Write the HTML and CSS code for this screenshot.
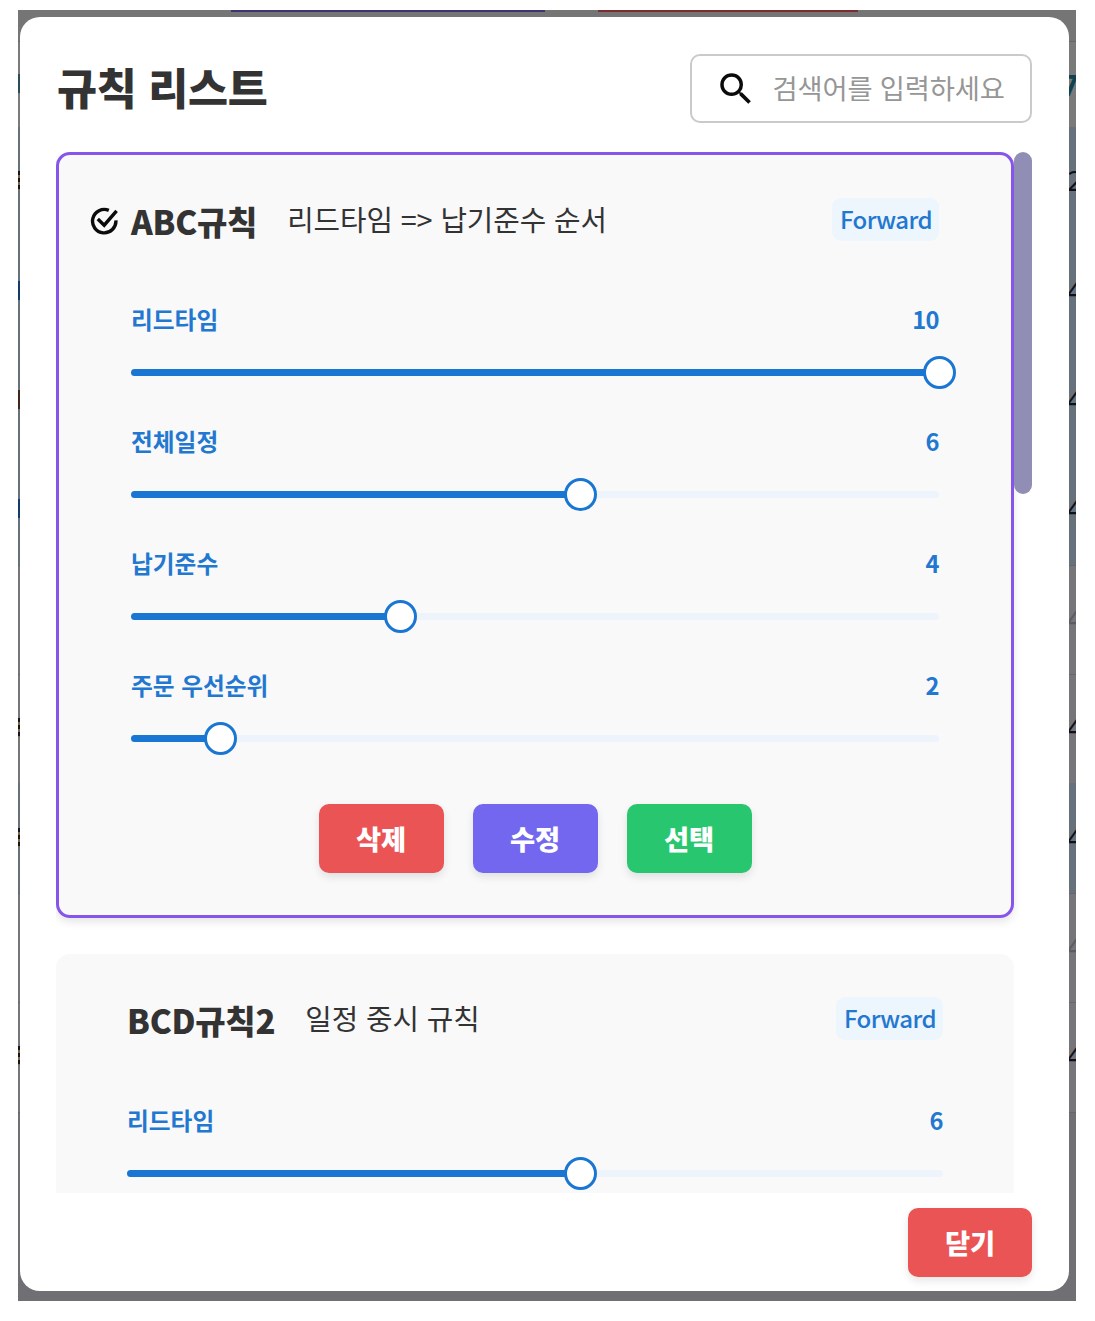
FILE: index.html
```html
<!DOCTYPE html>
<html lang="ko">
<head>
<meta charset="utf-8">
<title>규칙 리스트</title>
<link rel="stylesheet" href="styles.css">
</head>
<body>
<div class="stage">
  <div class="toolbar"><span class="tab tab-indigo"></span><span class="tab tab-red"></span></div>
  <div class="table">
    <div class="row row-head"><i class="mark teal"></i><span class="num">7</span></div>
    <div class="row sel"><i class="mark dark"></i><span class="num">2</span></div>
    <div class="row sel"><i class="mark blue"></i><span class="num">4</span></div>
    <div class="row sel"><i class="mark red"></i><span class="num">4</span></div>
    <div class="row sel"><i class="mark blue"></i><span class="num">4</span></div>
    <div class="row muted"><i class="mark"></i><span class="num">4</span></div>
    <div class="row"><i class="mark dark"></i><span class="num">4</span></div>
    <div class="row sel"><i class="mark dark"></i><span class="num">4</span></div>
    <div class="row muted"><i class="mark"></i><span class="num">4</span></div>
    <div class="row"><i class="mark dark"></i><span class="num">4</span></div>
    <div class="row row-foot"></div>
  </div>

  <main class="modal">
    <header class="modal-head">
      <h1>규칙 리스트</h1>
      <label class="search">
        <svg width="42" height="42" viewBox="0 0 24 24"><path d="M15.5 14h-.79l-.28-.27A6.47 6.47 0 0 0 16 9.5 6.5 6.5 0 1 0 9.5 16c1.61 0 3.09-.59 4.23-1.57l.27.28v.79l5 4.99L20.49 19l-4.99-5zm-6 0C7.01 14 5 11.99 5 9.5S7.01 5 9.5 5 14 7.01 14 9.5 11.99 14 9.5 14z"/></svg>
        <span>검색어를 입력하세요</span>
      </label>
    </header>

    <div class="list">
      <div class="cards">
        <section class="card active">
          <div class="card-head">
            <svg class="check" width="29" height="29" viewBox="0 0 29 29" fill="none" stroke="#0b0b0b" stroke-width="3.4"><path d="M18.8 3.4A11.7 11.7 0 1 0 25.9 13.4"/><path d="M7.8 12l6.4 6.2L26.6 3.8"/></svg>
            <h2>ABC규칙</h2>
            <p>리드타임 =&gt; 납기준수 순서</p>
            <span class="badge">Forward</span>
          </div>
          <div class="field"><div class="field-top"><span>리드타임</span><b>10</b></div><div class="track"><div class="fill" style="width:100%"></div><i class="thumb"></i></div></div>
          <div class="field"><div class="field-top"><span>전체일정</span><b>6</b></div><div class="track"><div class="fill" style="width:55.6%"></div><i class="thumb"></i></div></div>
          <div class="field"><div class="field-top"><span>납기준수</span><b>4</b></div><div class="track"><div class="fill" style="width:33.33%"></div><i class="thumb"></i></div></div>
          <div class="field"><div class="field-top"><span>주문 우선순위</span><b>2</b></div><div class="track"><div class="fill" style="width:11.11%"></div><i class="thumb"></i></div></div>
          <div class="actions">
            <button class="btn danger">삭제</button>
            <button class="btn primary">수정</button>
            <button class="btn success">선택</button>
          </div>
        </section>
        <section class="card">
          <div class="card-head">
            <h2>BCD규칙2</h2>
            <p>일정 중시 규칙</p>
            <span class="badge">Forward</span>
          </div>
          <div class="field"><div class="field-top"><span>리드타임</span><b>6</b></div><div class="track"><div class="fill" style="width:55.56%"></div><i class="thumb"></i></div></div>
        </section>
      </div>
      <div class="scrollbar"></div>
    </div>

    <footer class="modal-foot"><button class="btn danger">닫기</button></footer>
  </main>
</div>
</body>
</html>
```
FILE: styles.css
```css
* { box-sizing: border-box; }
body {
  margin: 0;
  padding: 10px 19px 20px 18px;
  background: #fff;
  color: #333;
  font-family: "Noto Sans CJK KR", sans-serif;
}
h1, h2, p { margin: 0; }

/* dimmed page behind the dialog */
.stage {
  position: relative;
  width: 1058px;
  height: 1291px;
  padding: 7px 7px 10px 2px;
  background: #757575;
  overflow: hidden;
}
.toolbar {
  position: absolute;
  inset: 0 0 auto 0;
  height: 2px;
  display: flex;
  gap: 53px;
  padding-left: 213px;
}
.tab { height: 2px; }
.tab-indigo { width: 314px; background: #3b3672; }
.tab-red { width: 260px; background: #7b2d2f; }
.table {
  position: absolute;
  inset: 31px 0 0 0;
  display: flex;
  flex-direction: column;
  background: #707074;
}
.row {
  height: 109.4px;
  flex: none;
  display: flex;
  align-items: center;
  justify-content: space-between;
  border-top: 1px solid #67676b;
  background: #75757a;
  color: #101018;
}
.row-head { height: 86px; background: #7b7a7a; color: #12414f; font-weight: 700; }
.row.sel { background: #66717b; border-top-color: #66717b; }
.row.muted { color: #5c5c62; }
.row-foot { height: 103px; background: #707074; }
.mark { width: 2px; height: 19px; margin-top: -3px; }
.teal { background: #2a4d58; }
.blue { background: #153b6b; }
.red { background: #44261f; }
.dark { background: repeating-linear-gradient(#15151a 0 4px, #80633c 4px 7px); }
.num {
  width: 9px;
  margin-top: -4px;
  font: 28px/30px "Noto Sans", sans-serif;
}
.row-head .num { width: 14px; font-weight: 700; margin-top: 0; }

.modal {
  position: relative;
  height: 1274px;
  padding: 37px 37px 14px;
  border-radius: 20px;
  background: #fff;
  display: flex;
  flex-direction: column;
}
.modal-head {
  display: flex;
  justify-content: space-between;
  align-items: center;
  height: 69px;
  margin-bottom: 29px;
}
h1 { font-size: 43.5px; font-weight: 900; line-height: 66px; letter-spacing: -.3px; padding-bottom: 3px; }
.search {
  display: flex;
  align-items: center;
  width: 342px;
  height: 69px;
  padding-left: 23px;
  gap: 15.5px;
  border: 2px solid #cacaca;
  border-radius: 10px;
  color: #969696;
  font-size: 27.3px;
  letter-spacing: -.15px;
  line-height: 40px;
  white-space: nowrap;
}
.search svg { flex: none; fill: #0b0b0b; }
.search span { padding-bottom: 3px; }

.list { display: flex; height: 1041px; margin-left: -1px; overflow: hidden; }
.cards { width: 958px; flex: none; }
.card {
  height: 766px;
  margin-bottom: 36px;
  padding: 35px 71px 0;
  border-radius: 14px;
  background: #f9f9f9;
}
.card.active {
  padding: 31px 72px 0;
  border: 3px solid #8655eb;
  box-shadow: 0 4px 8px rgba(0, 0, 0, .1);
}
.card-head {
  position: relative;
  display: flex;
  align-items: center;
  height: 68px;
  margin-bottom: 42px;
  white-space: nowrap;
}
.card:not(.active) .card-head { margin-top: -4px; margin-bottom: 44px; }
.check { position: absolute; left: -41px; top: 21px; }
h2 { font-size: 33px; font-weight: 900; line-height: 48px; padding-top: 2px; margin-right: 30px; letter-spacing: -.25px; }
.card-head p { font-size: 28.8px; line-height: 44px; padding-bottom: 2px; letter-spacing: -.1px; }
.badge {
  margin-left: auto;
  margin-bottom: 2px;
  height: 43px;
  padding: 0 7px 0 8px;
  border-radius: 9px;
  background: #edf5fd;
  color: #2278d0;
  font-size: 24px;
  letter-spacing: -.6px;
  font-weight: 500;
  line-height: 42px;
}
.field { height: 122px; color: #2278d0; }
.field-top {
  display: flex;
  justify-content: space-between;
  height: 47px;
  font-size: 23.7px;
  line-height: 46px;
  font-weight: 700;
}
.field-top b { font-weight: 700; letter-spacing: -.6px; }
.track {
  display: flex;
  align-items: center;
  height: 7px;
  margin-top: 26px;
  border-radius: 4px;
  background: #edf4fc;
}
.fill { flex: none; height: 7px; border-radius: 4px; background: #1976d2; }
.thumb {
  flex: none;
  width: 33px;
  height: 33px;
  margin-left: -16.5px;
  border: 3px solid #1976d2;
  border-radius: 50%;
  background: #fff;
}
.actions { display: flex; justify-content: center; gap: 29px; margin-top: 20px; }
.btn {
  width: 125px;
  height: 69px;
  padding: 0;
  border: 0;
  border-radius: 10px;
  color: #fff;
  font: 900 27.3px/69px "Noto Sans CJK KR", sans-serif;
  box-shadow: 0 4px 8px rgba(0, 0, 0, .1);
}
.danger { background: #ea5455; }
.primary { background: #7367f0; }
.success { background: #28c76f; }
.scrollbar { width: 18px; height: 342px; border-radius: 9px; background: #918eb5; }
.modal-foot { display: flex; justify-content: flex-end; margin-top: 15px; }
.modal-foot .btn { width: 124px; }
```
